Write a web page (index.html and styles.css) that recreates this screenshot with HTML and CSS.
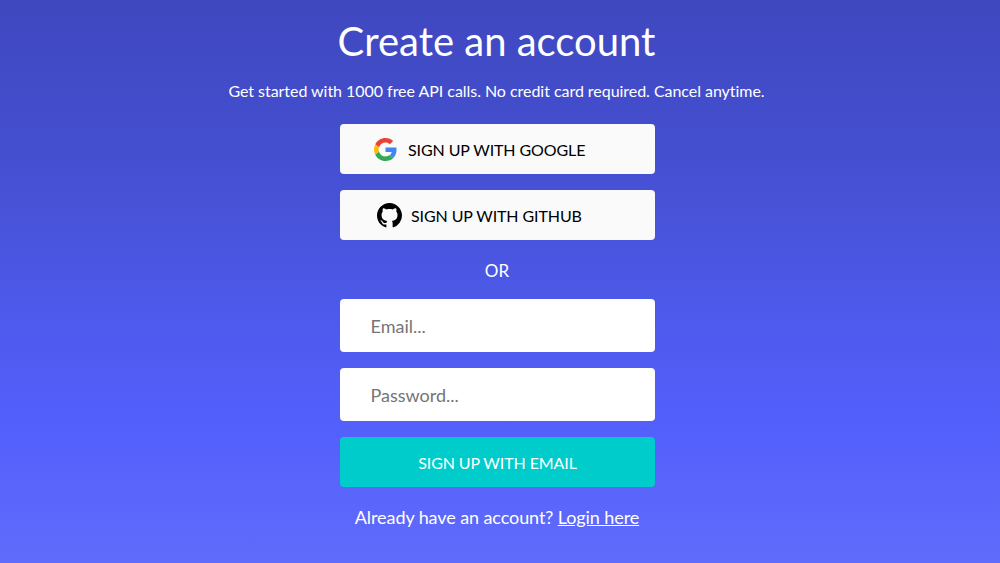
FILE: index.html
```html
<!DOCTYPE html>
<html lang="en">
<head>
   <meta charset="UTF-8">
   <title>Create an account</title>
   <link rel="stylesheet" href="styles.css">
</head>
<body>
<div class="signup">
   <h1 class="title">Create an account</h1>
   <p class="subtitle">Get started with 1000 free API calls. No credit card required. Cancel anytime.</p>
   <button class="btn btn-social btn-google">
      <svg class="icon" width="23" height="23" viewBox="0 0 48 48">
         <path fill="#EA4335" d="M24 9.5c3.5 0 6.7 1.2 9.2 3.6l6.9-6.9C35.9 2.4 30.5 0 24 0 14.6 0 6.5 5.4 2.6 13.2l8 6.2C12.5 13.7 17.800 9.5 24 9.500z"/>
         <path fill="#4285F4" d="M47 24.500c0-1.600-.1-3.100-.4-4.500H24v9h12.900c-.6 3-2.200 5.500-4.700 7.200l7.700 6C44.400 38 47 31.800 47 24.500z"/>
         <path fill="#FBBC05" d="M10.600 28.600c-.5-1.400-.8-3-.8-4.600s.3-3.200.8-4.600l-8-6.200C.9 16.500 0 20.100 0 24s.9 7.500 2.600 10.800l8-6.200z"/>
         <path fill="#34A853" d="M24 48c6.500 0 11.900-2.100 15.900-5.800l-7.700-6c-2.200 1.400-4.900 2.300-8.200 2.300-6.200 0-11.500-4.200-13.400-9.900l-8 6.200C6.500 42.600 14.600 48 24 48z"/>
      </svg>
      <span>SIGN UP WITH GOOGLE</span>
   </button>
   <button class="btn btn-social btn-github">
      <svg class="icon" width="25" height="25" viewBox="0 0 16 16">
         <path fill="#000" d="M8 0C3.580 0 0 3.580 0 8c0 3.540 2.290 6.530 5.470 7.590.4.070.55-.17.55-.38 0-.19-.01-.82-.01-1.490-2.010.37-2.530-.49-2.690-.94-.09-.23-.48-.94-.82-1.130-.28-.15-.68-.52-.01-.53.63-.01 1.080.58 1.230.82.72 1.210 1.870.87 2.330.66.070-.52.28-.87.51-1.070-1.780-.2-3.640-.89-3.640-3.950 0-.87.31-1.590.82-2.150-.08-.2-.36-1.020.08-2.120 0 0 .67-.21 2.200.82.64-.18 1.320-.27 2-.27s1.360.09 2 .27c1.530-1.040 2.200-.82 2.200-.82.44 1.100.16 1.920.08 2.120.51.56.82 1.270.82 2.150 0 3.070-1.870 3.750-3.650 3.950.29.25.54.73.54 1.480 0 1.070-.01 1.930-.01 2.200 0 .21.15.46.55.38A8.010 8.010 0 0 0 16 8c0-4.420-3.580-8-8-8z"/>
      </svg>
      <span>SIGN UP WITH GITHUB</span>
   </button>
   <div class="or">OR</div>
   <input class="field" type="text" placeholder="Email...">
   <input class="field" type="password" placeholder="Password...">
   <button class="btn btn-email">SIGN UP WITH EMAIL</button>
   <p class="login">Already have an account? <a href="#">Login here</a></p>
</div>
</body>
</html>
```

FILE: styles.css
```css
* {
   box-sizing: border-box;
}

body {
   margin: 0;
   height: 563px;
   overflow: hidden;
   font-family: Lato, "Liberation Sans", sans-serif;
   color: #fff;
   background: linear-gradient(180deg, #3f48bf 0%, #4550d2 30%, #4f5bef 60%, #535ffb 75%, #606cfb 100%);
}

.signup {
   width: 315px;
   margin-left: 340px;
   display: flex;
   flex-direction: column;
   align-items: center;
}

.title {
   margin: 14px 2px 0 0;
   font-size: 40px;
   font-weight: 400;
   line-height: 54px;
   white-space: nowrap;
}

.subtitle {
   margin: 13px 2px 0 0;
   font-size: 16px;
   line-height: 20px;
   letter-spacing: -0.04px;
   white-space: nowrap;
}

.btn {
   width: 100%;
   height: 50px;
   border: 0;
   border-radius: 4px;
   font-family: inherit;
   font-size: 16px;
   letter-spacing: -0.1px;
   cursor: pointer;
}

.btn-social {
   display: flex;
   align-items: center;
   background: #fafafa;
   color: #000;
}

.btn-google {
   margin-top: 23px;
   padding-left: 34px;
   gap: 11px;
}

.btn-github {
   margin-top: 16px;
   padding-left: 37px;
   gap: 9px;
}

.or {
   margin: 20px 1px 0 0;
   font-size: 17px;
   line-height: 21px;
}

.field {
   width: 100%;
   height: 53px;
   margin-top: 18px;
   padding: 0 30.5px;
   border: 0;
   border-radius: 4px;
   background: #fff;
   font-family: inherit;
   font-size: 18px;
}

.field + .field {
   margin-top: 16px;
}

.field::placeholder {
   color: #757575;
}

.btn-email {
   margin-top: 16px;
   background: #00cccc;
   color: #fff;
}

.login {
   margin: 19px 1px 0 0;
   font-size: 18px;
   line-height: 23px;
   letter-spacing: -0.09px;
   white-space: nowrap;
}

.login a {
   color: #fff;
}
```
